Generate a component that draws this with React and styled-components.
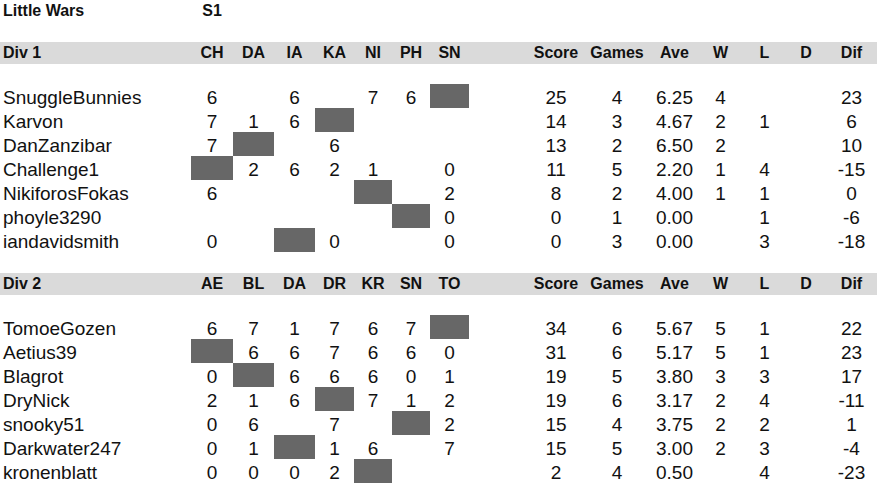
import React from "react";
import styled, { createGlobalStyle } from "styled-components";

const GlobalStyle = createGlobalStyle`
  html, body {
    margin: 0;
    padding: 0;
    background: #fff;
  }
  body {
    font-family: "Liberation Sans", Arial, sans-serif;
    color: #111;
  }
`;

const COLUMNS =
  "191px 42px 41px 41px 39px 38px 38px 39px 60px 54px 68px 47px 45px 43px 40px 51px";

const STATS = ["Score", "Games", "Ave", "W", "L", "D", "Dif"];

// X marks the cell where a player would meet himself
const divisions = [
  {
    name: "Div 1",
    opponents: ["CH", "DA", "IA", "KA", "NI", "PH", "SN"],
    players: [
      ["SnuggleBunnies", ["6", "", "6", "", "7", "6", "X"], ["25", "4", "6.25", "4", "", "", "23"]],
      ["Karvon", ["7", "1", "6", "X", "", "", ""], ["14", "3", "4.67", "2", "1", "", "6"]],
      ["DanZanzibar", ["7", "X", "", "6", "", "", ""], ["13", "2", "6.50", "2", "", "", "10"]],
      ["Challenge1", ["X", "2", "6", "2", "1", "", "0"], ["11", "5", "2.20", "1", "4", "", "-15"]],
      ["NikiforosFokas", ["6", "", "", "", "X", "", "2"], ["8", "2", "4.00", "1", "1", "", "0"]],
      ["phoyle3290", ["", "", "", "", "", "X", "0"], ["0", "1", "0.00", "", "1", "", "-6"]],
      ["iandavidsmith", ["0", "", "X", "0", "", "", "0"], ["0", "3", "0.00", "", "3", "", "-18"]],
    ],
  },
  {
    name: "Div 2",
    opponents: ["AE", "BL", "DA", "DR", "KR", "SN", "TO"],
    players: [
      ["TomoeGozen", ["6", "7", "1", "7", "6", "7", "X"], ["34", "6", "5.67", "5", "1", "", "22"]],
      ["Aetius39", ["X", "6", "6", "7", "6", "6", "0"], ["31", "6", "5.17", "5", "1", "", "23"]],
      ["Blagrot", ["0", "X", "6", "6", "6", "0", "1"], ["19", "5", "3.80", "3", "3", "", "17"]],
      ["DryNick", ["2", "1", "6", "X", "7", "1", "2"], ["19", "6", "3.17", "2", "4", "", "-11"]],
      ["snooky51", ["0", "6", "", "7", "", "X", "2"], ["15", "4", "3.75", "2", "2", "", "1"]],
      ["Darkwater247", ["0", "1", "X", "1", "6", "", "7"], ["15", "5", "3.00", "2", "3", "", "-4"]],
      ["kronenblatt", ["0", "0", "0", "2", "X", "", ""], ["2", "4", "0.50", "", "4", "", "-23"]],
    ],
  },
];

export default function App() {
  return (
    <>
      <GlobalStyle />
      <Sheet>
        <HeadRow>
          <HeadCell $left>Little Wars</HeadCell>
          <HeadCell>S1</HeadCell>
        </HeadRow>
        {divisions.map((div, i) => (
          <Division key={div.name} $first={i === 0}>
            <HeadRow $band>
              <HeadCell $left>{div.name}</HeadCell>
              {div.opponents.map((o) => (
                <HeadCell key={o}>{o}</HeadCell>
              ))}
              <HeadCell />
              {STATS.map((s) => (
                <HeadCell key={s}>{s}</HeadCell>
              ))}
            </HeadRow>
            <Players>
              {div.players.map(([name, results, stats]) => (
                <DataRow key={name}>
                  <Cell $left>{name}</Cell>
                  {results.map((r, j) => (
                    <Cell key={j} $self={r === "X"}>
                      {r === "X" ? "" : r}
                    </Cell>
                  ))}
                  <Cell />
                  {stats.map((s, j) => (
                    <Cell key={j}>{s}</Cell>
                  ))}
                </DataRow>
              ))}
            </Players>
          </Division>
        ))}
      </Sheet>
    </>
  );
}

const Sheet = styled.div`
  width: 877px;
  display: flex;
  flex-direction: column;
`;

const Division = styled.section`
  display: flex;
  flex-direction: column;
  margin-top: ${(p) => (p.$first ? "20px" : "21px")};
`;

const Players = styled.div`
  display: flex;
  flex-direction: column;
  margin-top: 20px;
`;

const HeadRow = styled.div`
  display: grid;
  grid-template-columns: ${COLUMNS};
  height: 22px;
  background: ${(p) => (p.$band ? "#dadada" : "transparent")};
`;

const HeadCell = styled.div`
  font-size: 16px;
  font-weight: bold;
  line-height: 22px;
  color: #111;
  text-align: ${(p) => (p.$left ? "left" : "center")};
  padding-left: ${(p) => (p.$left ? "3px" : "0")};
  white-space: nowrap;
`;

const DataRow = styled.div`
  display: grid;
  grid-template-columns: ${COLUMNS};
  height: 24px;
`;

const Cell = styled.div`
  display: flex;
  align-items: flex-end;
  justify-content: ${(p) => (p.$left ? "flex-start" : "center")};
  padding-left: ${(p) => (p.$left ? "3px" : "0")};
  font-size: 19px;
  line-height: 20px;
  color: #111;
  white-space: nowrap;
  background: ${(p) => (p.$self ? "#676767" : "transparent")};
`;
